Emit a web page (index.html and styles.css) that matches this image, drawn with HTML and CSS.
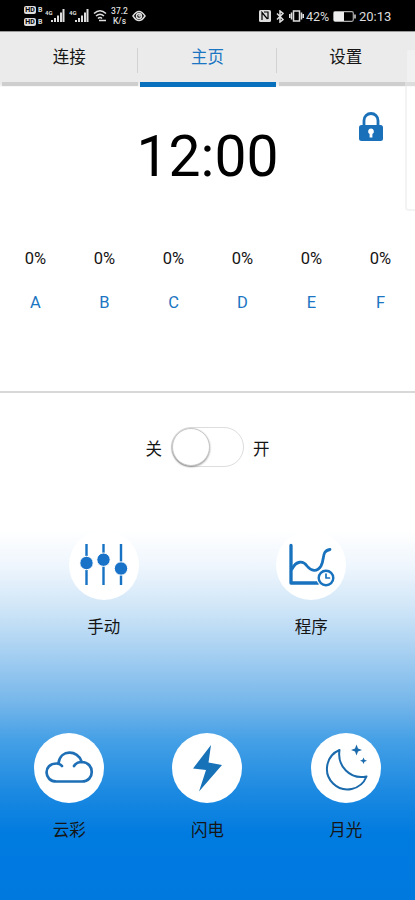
FILE: index.html
```html
<!DOCTYPE html>
<html lang="zh-CN">
<head>
  <meta charset="UTF-8">
  <meta name="viewport" content="width=device-width, initial-scale=1.0">
  <title>主页</title>
  <link rel="stylesheet" href="styles.css">
</head>
<body>
  <div class="statusbar">
    <div class="status-left">
      <div class="sims">
        <div><span class="hd">HD</span><b>B</b></div>
        <div><span class="hd">HD</span><b>B</b></div>
      </div>
      <svg class="signal" width="20" height="14" viewBox="0 0 20 14"><text x="0" y="6">4G</text><path d="M7 11v2M10 9v4M13 6.500v6.500M16 3.500v9.500M18.500 0v13"/></svg>
      <svg class="signal" width="20" height="14" viewBox="0 0 20 14"><text x="0" y="6">4G</text><path d="M7 11v2M10 9v4M13 6.500v6.500M16 3.500v9.500M18.500 0v13"/></svg>
      <svg class="wifi" width="15" height="14" viewBox="0 0 15 14"><path d="M1 4.500Q7 -1 13 4.500M3 7Q7 3.500 11 7M5 9.500Q7 7.500 9 9.500M6 11.500h7"/></svg>
      <div class="speed"><span>37.2</span><span>K/s</span></div>
      <svg class="eye" width="14" height="12" viewBox="0 0 14 12"><path d="M1 6Q7 -3 13 6Q7 15 1 6z"/><circle cx="7" cy="6" r="2.500"/><circle cx="7.500" cy="5.500" r=".6"/></svg>
    </div>
    <div class="status-right">
      <svg class="nfc" width="12" height="12" viewBox="0 0 12 12"><rect width="12" height="12" rx="1.500" fill="#ddd"/><path d="M3 10V2.500L8.500 9M5 2h4v7" fill="none" stroke="#000" stroke-width="1.200"/></svg>
      <svg class="bt" width="8" height="13" viewBox="0 0 8 13"><path d="M1 3.500l6 6-3 2.500V1l3 2.500-6 6"/></svg>
      <svg class="vibrate" width="15" height="12" viewBox="0 0 15 12"><path d="M4.500 1h6v10h-6zM2.500 2.500v7M12.500 2.500v7M.7 4v4M14.300 4v4"/></svg>
      <span class="percent">42%</span>
      <svg class="battery" width="23" height="11" viewBox="0 0 23 11"><rect x=".7" y=".7" width="19.600" height="9.600" rx="1.500" fill="none" stroke="#aaa" stroke-width="1.200"/><rect x="1" y="1" width="10" height="9" fill="#eee"/><path d="M22 3.500v4" stroke="#ddd" stroke-width="1.500"/></svg>
      <span class="time">20:13</span>
    </div>
  </div>

  <div class="tabs">
    <div class="tab">连接</div>
    <div class="tab active">主页</div>
    <div class="tab">设置</div>
  </div>
  <div class="side-panel"></div>

  <div class="clock-row">
    <div class="clock">12:00</div>
    <svg class="lock" width="24" height="30" viewBox="0 0 24 30">
      <path d="M5 15V8.500a7 7 0 0 1 14 0V15" fill="none" stroke="#1b70ba" stroke-width="2.800"/>
      <rect y="13" width="24" height="16" rx="2.500" fill="#1b70ba"/>
      <path d="M12 16.500a3 3 0 0 1 1.400 5.600V25.500h-2.800V22.100A3 3 0 0 1 12 16.500z" fill="#fff"/>
    </svg>
  </div>

  <div class="channels">
    <div class="channel"><span>0%</span><span class="name">A</span></div>
    <div class="channel"><span>0%</span><span class="name">B</span></div>
    <div class="channel"><span>0%</span><span class="name">C</span></div>
    <div class="channel"><span>0%</span><span class="name">D</span></div>
    <div class="channel"><span>0%</span><span class="name">E</span></div>
    <div class="channel"><span>0%</span><span class="name">F</span></div>
  </div>

  <div class="power">
    <span>关</span>
    <div class="switch"><div class="knob"></div></div>
    <span>开</span>
  </div>

  <div class="modes">
    <div class="mode">
      <div class="circle">
        <svg width="70" height="70" viewBox="0 0 70 70">
          <path d="M17.500 14v41M34.500 14v41M52 14v41" fill="none" stroke="#1872c4" stroke-width="2.400"/>
          <g fill="#1872c8" stroke="#fff" stroke-width="1"><circle cx="17.500" cy="33" r="6.700"/><circle cx="34.500" cy="29.700" r="6.700"/><circle cx="52" cy="38.500" r="6.700"/></g>
        </svg>
      </div>
      <span>手动</span>
    </div>
    <div class="mode">
      <div class="circle">
        <svg width="70" height="70" viewBox="0 0 70 70" fill="none" stroke="#1872bd" stroke-linecap="round" stroke-linejoin="round">
          <path d="M15 15.500V53H42" stroke-width="3.300"/>
          <path d="M16 39C20 31 27 30 31 36C35 41 41 42.500 45 36C49 29 45 21 54 19.500" stroke-width="2.800"/>
          <circle cx="50" cy="48" r="9.500" fill="#fff" stroke="none"/>
          <circle cx="50" cy="48" r="7.300" stroke-width="2.400"/>
          <path d="M50 44v4h3.500" stroke-width="1.700"/>
        </svg>
      </div>
      <span>程序</span>
    </div>
  </div>

  <div class="modes effects">
    <div class="mode">
      <div class="circle">
        <svg width="70" height="70" viewBox="0 0 70 70" fill="none" stroke="#1e6fb5" stroke-width="2.700" stroke-linecap="round" stroke-linejoin="round">
          <path d="M28 33C26.500 31.200 25 30.500 22.500 30.500C9 30.500 9.500 48.500 22.500 48.500H48C61 48.500 61 29.500 48 29C44 29 41.500 30.500 40 33M24.500 30C26.500 16 44 17 47.500 28.500"/>
        </svg>
      </div>
      <span>云彩</span>
    </div>
    <div class="mode">
      <div class="circle">
        <svg width="70" height="70" viewBox="0 0 70 70"><path d="M39 12L21 35.500L34 37L27 58.500L50 32L36.500 29.500Z" fill="#1872b8"/></svg>
      </div>
      <span>闪电</span>
    </div>
    <div class="mode">
      <div class="circle">
        <svg width="70" height="70" viewBox="0 0 70 70">
          <path d="M28.500 17A20.500 20.500 0 1 0 55.500 43.500C39 47 26 33 28.500 17Z" fill="none" stroke="#1a6aac" stroke-width="2" stroke-linejoin="round"/>
          <path d="M45.500 11.500l1.500 4 4 1.500-4 1.500-1.500 4-1.500-4-4-1.500 4-1.500zM52.500 24.500l1 2.300 2.500 1-2.500 1-1 2.300-1-2.300-2.500-1 2.500-1z" fill="#1a6aac"/>
        </svg>
      </div>
      <span>月光</span>
    </div>
  </div>
</body>
</html>
```

FILE: styles.css
```css
* {
  box-sizing: border-box;
}

body {
  margin: 0;
  height: 900px;
  overflow: hidden;
  font-family: Roboto, "Noto Sans CJK SC", sans-serif;
  font-size: 16.5px;
  color: #151515;
  background: linear-gradient(#fff 530px, #eff6fd 565px, #d2e7f8 605px, #a9d1f2 650px, #75b6ea 703px, #45a0e6 740px, #1d8ae1 790px, #007be0 835px, #0079df 900px);
}

.statusbar {
  display: flex;
  justify-content: space-between;
  height: 31px;
  padding: 0 23px 0 24px;
  background: #000;
  color: #ddd;
}

.status-left,
.status-right {
  display: flex;
  align-items: center;
}

.sims {
  display: grid;
  gap: 3px;
  width: 18px;
  margin-right: 3px;
}

.sims div {
  display: flex;
  align-items: center;
  gap: 2px;
  height: 9px;
  font-size: 7px;
}

.hd {
  width: 12px;
  height: 8px;
  border-radius: 2px;
  background: #ddd;
  color: #000;
  font-size: 7px;
  font-weight: bold;
  line-height: 8px;
  text-align: center;
}

.signal {
  margin-right: 4px;
}

.signal text {
  fill: #ddd;
  font-size: 6px;
  font-weight: bold;
}

.signal path {
  stroke: #ddd;
  stroke-width: 2;
}

.wifi {
  margin-right: 2px;
}

.wifi path,
.eye,
.bt path,
.vibrate path {
  fill: none;
  stroke: #ddd;
  stroke-width: 1.5;
}

.speed {
  display: grid;
  width: 19px;
  margin-right: 3px;
  font-size: 8.5px;
  font-weight: 500;
  line-height: 10px;
  text-align: center;
}

.status-right {
  padding-top: 1px;
}

.nfc,
.bt {
  margin-right: 5px;
}

.vibrate {
  margin-right: 2px;
}

.percent {
  width: 27px;
  font-size: 12.5px;
}

.battery {
  margin-right: 3px;
}

.time {
  width: 33px;
  font-size: 13px;
  white-space: nowrap;
}

.tabs {
  display: grid;
  grid-template-columns: repeat(3, 1fr);
  height: 56px;
  border-top: 1px solid #999;
  background: linear-gradient(#ebebeb 52px, #fff 56px);
}

.tab {
  display: flex;
  justify-content: center;
  padding-top: 14px;
  line-height: 24px;
  background:
    linear-gradient(#d2d2d2, #d2d2d2) right 16px / 1px 25px no-repeat,
    linear-gradient(#cecece, #cecece) 2px 50px / calc(100% - 2px) 4px no-repeat;
}

.tab:last-child {
  background: linear-gradient(#cecece, #cecece) 2px 50px / calc(100% - 2px) 4px no-repeat;
}

.tab.active {
  color: #1b75c2;
  background:
    linear-gradient(#d2d2d2, #d2d2d2) right 16px / 1px 25px no-repeat,
    linear-gradient(#0870bd, #0870bd) 2px 50px / calc(100% - 3px) 5px no-repeat;
}

/* edge of the drawer, drawn over the tabs */
.side-panel {
  position: absolute;
  top: 48px;
  right: 0;
  width: 10px;
  height: 163px;
  border: 2px solid rgba(225, 225, 225, 0.4);
  border-right: 0;
  border-radius: 4px 0 0 4px;
  background: rgba(255, 255, 255, 0.3);
}

.clock-row {
  display: grid;
  grid-template-columns: 1fr auto 1fr;
  height: 160px;
  padding: 25px 32px 0;
}

.clock {
  grid-column: 2;
  height: 90px;
  font-size: 57px;
  line-height: 90px;
  color: #000;
}

.lock {
  justify-self: end;
}

.channels {
  display: grid;
  grid-template-columns: repeat(6, 1fr);
  height: 146px;
  padding-left: 1px;
  border-bottom: 2px solid #d8d8d8;
}

.channel {
  display: flex;
  flex-direction: column;
  align-items: center;
  gap: 20px;
  line-height: 24px;
}

.name {
  color: #1b75c2;
}

.power {
  display: flex;
  justify-content: center;
  align-items: center;
  gap: 9px;
  height: 107px;
}

.power span {
  padding-top: 3px;
}

.switch {
  width: 73px;
  height: 40px;
  border: 1px solid #ddd;
  border-radius: 20px;
  background: #fff;
}

.knob {
  width: 38px;
  height: 38px;
  border: 1px solid #c8c8c8;
  border-radius: 50%;
  background: #fff;
  box-shadow: 0 1px 2px rgba(0, 0, 0, 0.4);
}

.modes {
  display: grid;
  grid-template-columns: repeat(2, 1fr);
  padding-top: 30px;
  height: 233px;
}

.effects {
  grid-template-columns: repeat(3, 1fr);
  padding-top: 0;
  height: 167px;
}

.mode {
  display: flex;
  flex-direction: column;
  align-items: center;
  gap: 16px;
  line-height: 24px;
}

.circle {
  width: 70px;
  height: 70px;
  border-radius: 50%;
  background: #fff;
}

.circle svg {
  display: block;
}
```
